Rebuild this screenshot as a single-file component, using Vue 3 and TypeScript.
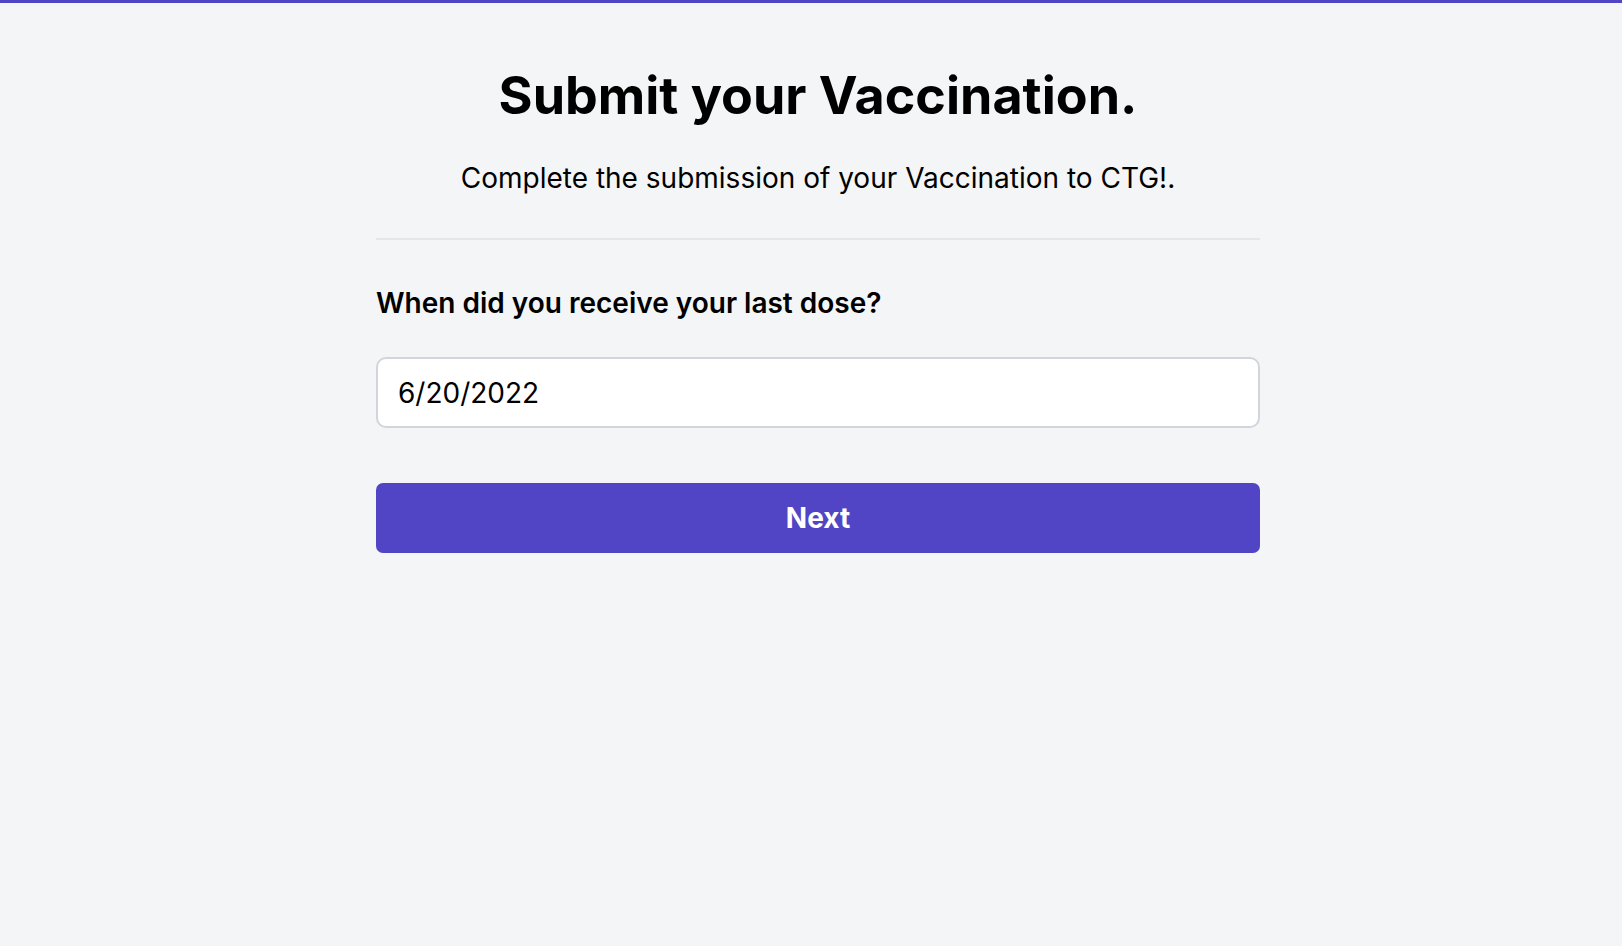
<script setup lang="ts">
import { ref } from 'vue'

const doseDate = ref<string>('6/20/2022')
</script>

<template>
  <main class="page">
    <div class="panel">
      <header class="intro">
        <h1 class="title">Submit your Vaccination.</h1>
        <p class="subtitle">Complete the submission of your Vaccination to CTG!.</p>
      </header>
      <form class="form" @submit.prevent>
        <label class="label" for="dose-date">When did you receive your last dose?</label>
        <input id="dose-date" v-model="doseDate" class="field" type="text" />
        <button class="next" type="submit">Next</button>
      </form>
    </div>
  </main>
</template>

<style>
body {
  margin: 0;
  background: #f4f5f7;
}
</style>

<style scoped>
.page {
  box-sizing: border-box;
  min-height: 100vh;
  padding: 60px 16px 60px 30px;
  border-top: 3px solid #5145c5;
  color: #000;
  font-family: Inter, "Liberation Sans", sans-serif;
  font-size: 28px;
  line-height: 42px;
}

.panel {
  max-width: 884px;
  margin: 0 auto;
}

.intro {
  padding-bottom: 39px;
  border-bottom: 2px solid #e5e6e9;
  text-align: center;
}

.title {
  margin: 0;
  font-size: 52px;
  font-weight: 700;
  line-height: 66px;
}

.subtitle {
  margin: 28px 0 0;
}

.form {
  display: flex;
  flex-direction: column;
  padding-top: 42px;
}

.label {
  font-weight: 600;
}

.field {
  box-sizing: border-box;
  width: 100%;
  height: 71px;
  margin: 33px 0 55px;
  padding: 0 20px;
  border: 2px solid #d3d5dc;
  border-radius: 10px;
  background: #fff;
  color: #000;
  font: inherit;
}

.next {
  height: 70px;
  padding: 0 28px;
  border: 0;
  border-radius: 7px;
  background: #5145c5;
  color: #fff;
  font: inherit;
  font-weight: 700;
  cursor: pointer;
}
</style>
